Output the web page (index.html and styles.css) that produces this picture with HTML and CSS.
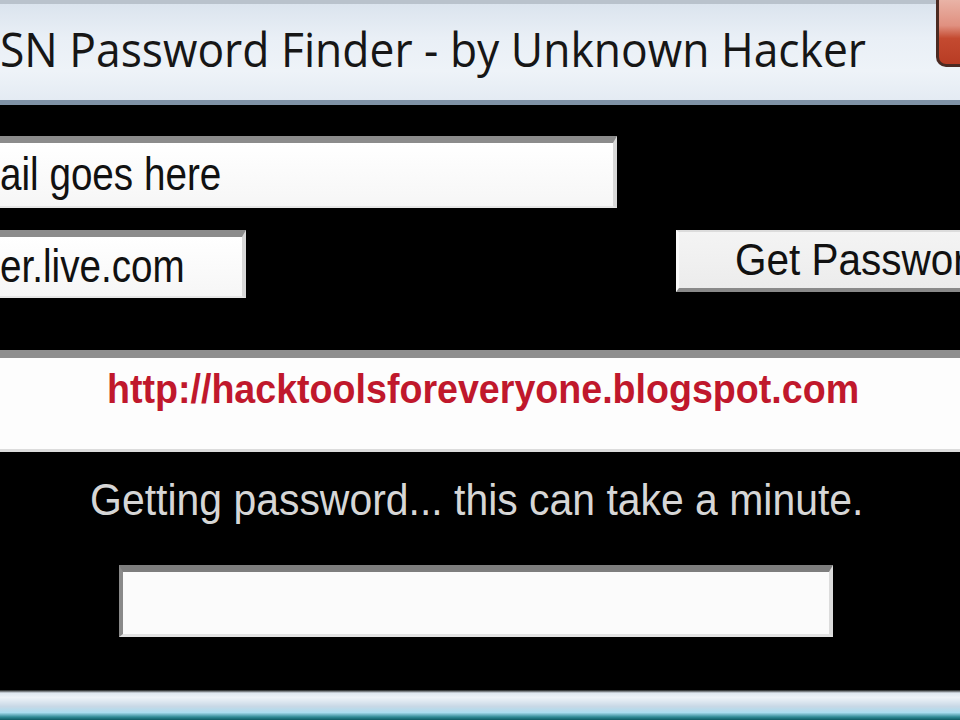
FILE: index.html
```html
<!DOCTYPE html>
<html>
<head>
<meta charset="utf-8">
<link rel="stylesheet" href="styles.css">
</head>
<body>
<div class="window">
  <div class="titlebar">
    <span class="title">SN Password Finder - by Unknown Hacker</span>
    <span class="close"></span>
  </div>
  <div class="body">
    <div class="field email"><span class="ftext">ail goes here</span></div>
    <div class="row">
      <div class="field server"><span class="ftext">er.live.com</span></div>
      <div class="button"><span class="btext">Get Passwor</span></div>
    </div>
    <div class="linkpanel"><span class="link">http://hacktoolsforeveryone.blogspot.com</span></div>
    <div class="status"><span class="stext">Getting password... this can take a minute.</span></div>
    <div class="progress"></div>
  </div>
  <div class="frame"></div>
</div>
</body>
</html>
```
FILE: styles.css
```css
html, body {
  margin: 0;
  padding: 0;
  background: #000;
}
body {
  width: 960px;
  height: 720px;
  overflow: hidden;
  font-family: "Liberation Sans", Arial, sans-serif;
}
.window {
  display: flex;
  flex-direction: column;
  height: 720px;
}
.titlebar {
  height: 96px;
  border-top: 4px solid #b9c2cc;
  border-bottom: 5px solid #7f92a6;
  background: linear-gradient(#dbe4ee 0%, #e9eff6 35%, #eef3f8 70%, #e4ebf3 100%);
  display: flex;
  justify-content: space-between;
  align-items: flex-start;
  box-sizing: content-box;
}
.title {
  display: inline-block;
  font-family: "Open Sans", "Noto Sans", sans-serif;
  font-size: 48px;
  color: #161616;
  margin-top: 17px;
  line-height: 56px;
  white-space: nowrap;
  transform: scaleX(0.925);
  transform-origin: left center;
}
.close {
  width: 28px;
  height: 64px;
  margin-top: -4px;
  border: 3px solid #4b2a22;
  border-right: none;
  border-top: none;
  border-bottom-left-radius: 10px;
  background: linear-gradient(#e9b3a6 0%, #e09080 40%, #c44a30 60%, #b83c24 100%);
}
.body {
  flex: 1;
  display: flex;
  flex-direction: column;
  padding-top: 31px;
}
.field {
  background: linear-gradient(#ffffff, #f6f6f6);
  border-top: 7px solid #8c8c8c;
  border-right: 4px solid #d8d8d8;
  border-bottom: 2px solid #e6e6e6;
  box-sizing: border-box;
  display: flex;
  align-items: center;
  color: #111;
}
.email {
  width: 617px;
  height: 72px;
}
.ftext {
  display: inline-block;
  font-size: 46px;
  line-height: 50px;
  margin-top: -2px;
  white-space: nowrap;
  transform: scaleX(0.84);
  transform-origin: left center;
}
.row {
  display: flex;
  justify-content: space-between;
  align-items: flex-start;
  margin-top: 22px;
}
.server {
  width: 246px;
  height: 68px;
}
.button {
  width: 284px;
  height: 62px;
  box-sizing: border-box;
  background: linear-gradient(#f4f4f4, #ececec);
  border-top: 2px solid #dcdcdc;
  border-left: 3px solid #fafafa;
  border-bottom: 4px solid #8a8a8a;
  padding-left: 56px;
  display: flex;
  align-items: center;
  overflow: hidden;
  white-space: nowrap;
}
.btext {
  display: inline-block;
  font-size: 44px;
  line-height: 50px;
  color: #111;
  transform: scaleX(0.92);
  transform-origin: left center;
}
.linkpanel {
  margin-top: 52px;
  height: 102px;
  box-sizing: border-box;
  background: #fdfdfd;
  border-top: 8px solid #8e8e8e;
  border-bottom: 3px solid #dcdcdc;
  display: flex;
  justify-content: center;
  padding-top: 8px;
  padding-left: 6px;
}
.link {
  display: inline-block;
  font-weight: bold;
  font-size: 40px;
  line-height: 46px;
  color: #c0182c;
  white-space: nowrap;
  transform: scaleX(0.94);
}
.status {
  margin-top: 23px;
  text-align: center;
  padding-right: 6px;
  line-height: 50px;
}
.stext {
  display: inline-block;
  font-size: 44px;
  color: #d6d6d6;
  white-space: nowrap;
  transform: scaleX(0.93);
}
.progress {
  margin: 30px 0 0 119px;
  width: 714px;
  height: 72px;
  box-sizing: border-box;
  background: #fbfbfb;
  border-top: 7px solid #7e7e7e;
  border-left: 4px solid #8a8a8a;
  border-right: 4px solid #dcdcdc;
  border-bottom: 3px solid #e2e2e2;
}
.frame {
  height: 30px;
  background: linear-gradient(#1a1a1a 0%, #dfe8f0 10%, #eef3f8 25%, #c8d8e6 55%, #a9dcef 75%, #2f8a96 90%, #0c5a64 100%);
}
```
